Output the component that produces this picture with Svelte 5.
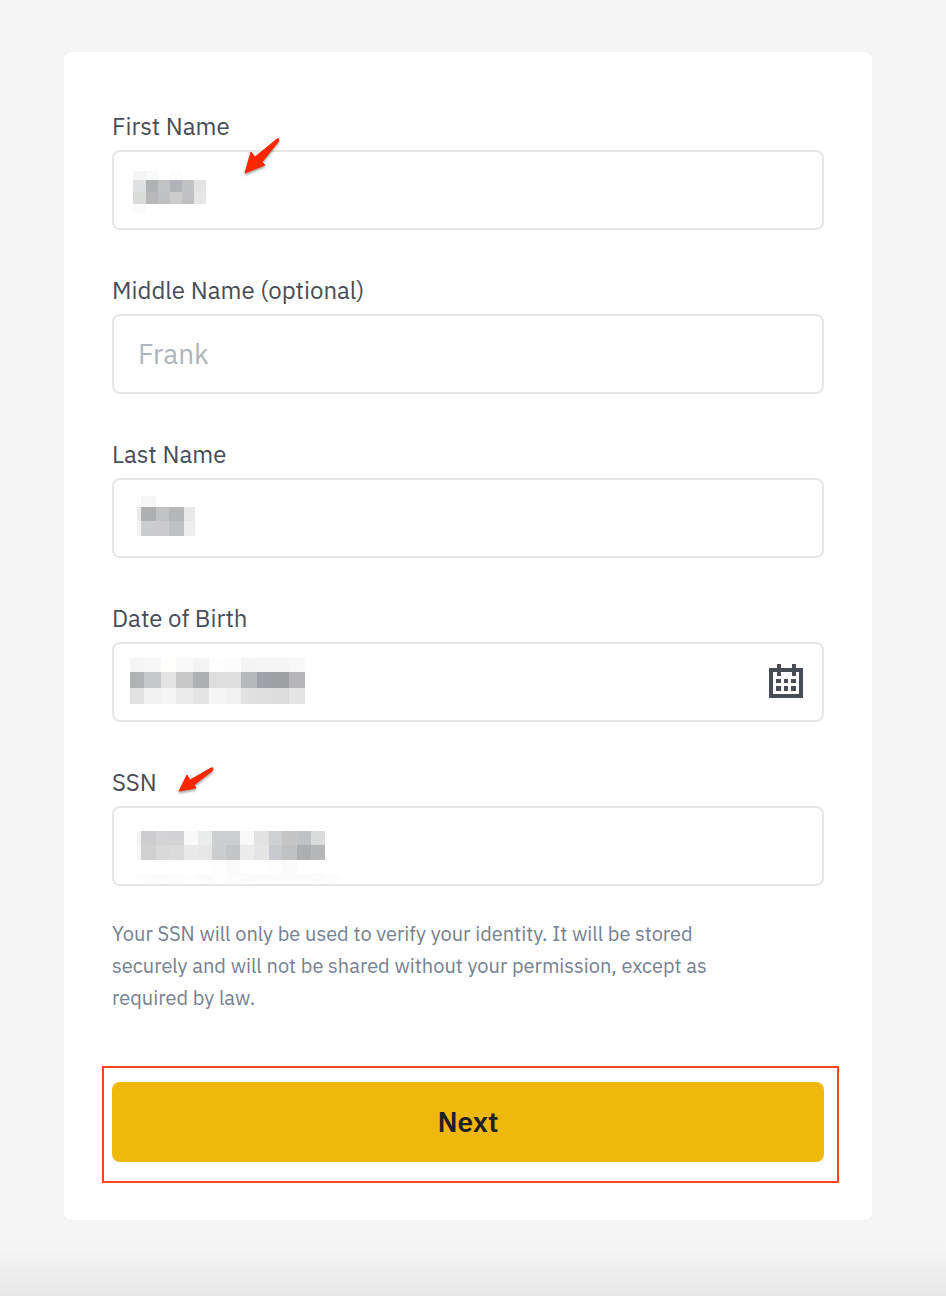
<script lang="ts">
  interface Mosaic {
    left: number;
    top: number;
    cols: number[];
    rows: { height: number; shades: string[] }[];
  }

  interface Cell {
    x: number;
    y: number;
    width: number;
    height: number;
    shade: string;
  }

  interface Field {
    id: string;
    label: string;
    placeholder?: string;
    calendar?: boolean;
    arrow?: 'steep' | 'flat';
    mosaic?: Mosaic;
  }

  const fields: Field[] = [
    {
      id: 'first-name',
      label: 'First Name',
      arrow: 'steep',
      mosaic: {
        left: 21,
        top: 21,
        cols: [13, 12, 12, 12, 12, 12],
        rows: [
          { height: 9, shades: ['f5f5f5', 'f9fbfa', 'ffffff', 'fcfcfc', 'ffffff', 'ffffff'] },
          { height: 12, shades: ['e0e1e3', 'b0b2b4', 'c0c2c4', 'b2b3b6', 'c0c1c3', 'e3e3e4'] },
          { height: 12, shades: ['dadcda', 'b7b7b9', 'bfc0c2', 'cccbcc', 'c0c0c3', 'e6e6e6'] },
          { height: 9, shades: ['fbfbfb', 'ffffff', 'ffffff', 'ffffff', 'ffffff', 'ffffff'] },
        ],
      },
    },
    { id: 'middle-name', label: 'Middle Name (optional)', placeholder: 'Frank' },
    {
      id: 'last-name',
      label: 'Last Name',
      mosaic: {
        left: 25,
        top: 18,
        cols: [4, 15, 13, 15, 11],
        rows: [
          { height: 11, shades: ['fdfdfd', 'f6f6f6', 'ffffff', 'ffffff', 'ffffff'] },
          { height: 14, shades: ['eaeaea', 'aeafb1', 'c1c2c4', 'b6b7b9', 'e8e8e8'] },
          { height: 15, shades: ['f2f2f2', 'cbccce', 'cccbcd', 'bfc0c2', 'eeeeee'] },
        ],
      },
    },
    {
      id: 'birth-date',
      label: 'Date of Birth',
      calendar: true,
      mosaic: {
        left: 18,
        top: 16,
        cols: [14, 17, 15, 17, 16, 16, 16, 16, 15, 17, 16],
        rows: [
          { height: 14, shades: ['f5f5f5', 'f7f7f7', 'fefefc', 'f9f9f9', 'f3f3f4', 'fdfdfd', 'fcfcfc', 'f4f4f4', 'f5f5f5', 'f5f5f5', 'f8f8f8'] },
          { height: 16, shades: ['b0b1b4', 'c5c7c9', 'e4e4e4', 'c7c7c8', 'afb0b2', 'dedede', 'dfdfdf', 'b7b9bb', 'a2a3a8', '9fa0a4', 'b6b6b8'] },
          { height: 16, shades: ['e2e2e2', 'f1f1f1', 'f5f5f5', 'eaeaea', 'e5e5e5', 'f5f5f5', 'f1f1f1', 'e1e1e1', 'dfdfdf', 'dcdcdc', 'e4e4e4'] },
        ],
      },
    },
    {
      id: 'ssn',
      label: 'SSN',
      arrow: 'flat',
      mosaic: {
        left: 25,
        top: 25,
        cols: [4, 15, 14, 14, 14, 14, 14, 14, 14, 15, 13, 15, 14, 14, 16],
        rows: [
          { height: 14, shades: ['f3f3f3', 'cdcdd0', 'd4d4d6', 'd3d3d6', 'f9f9f9', 'e9ecea', 'cdced0', 'cdced0', 'f9f9f9', 'e2e2e2', 'cfd0d2', 'c5c5c5', 'c0c2c4', 'd9dcda', 'ffffff'] },
          { height: 15, shades: ['f7f7f7', 'd0d0d0', 'd9d9d9', 'dbdbdc', 'e9e9e9', 'e7e7e7', 'cccdcf', 'c4c5c7', 'ebebeb', 'e5e5e5', 'c8c9cc', 'c0c1c3', 'aeafb1', 'b6b7b9', 'fefefe'] },
          { height: 14, shades: ['ffffff', 'ffffff', 'ffffff', 'ffffff', 'ffffff', 'ffffff', 'fdfdfd', 'fafafa', 'ffffff', 'ffffff', 'fdfdfd', 'fafafa', 'ffffff', 'ffffff', 'ffffff'] },
          { height: 7, shades: ['fcfcfc', 'fcfcfc', 'fbfbfb', 'fcfcfc', 'fdfdfd', 'fbfbfb', 'fdfdfd', 'fcfcfc', 'fafafa', 'fbfbfb', 'fbfbfb', 'fbfbfb', 'fbfbfb', 'fafafa', 'fcfcfc'] },
        ],
      },
    },
  ];

  function sum(values: number[]) {
    return values.reduce((total, value) => total + value, 0);
  }

  function toCells(mosaic: Mosaic): Cell[] {
    const cells: Cell[] = [];
    let y = 0;
    for (const row of mosaic.rows) {
      let x = 0;
      mosaic.cols.forEach((width, i) => {
        cells.push({ x, y, width, height: row.height, shade: `#${row.shades[i]}` });
        x += width;
      });
      y += row.height;
    }
    return cells;
  }
</script>

<main class="page">
  <form class="card" onsubmit={(e) => e.preventDefault()}>
    <div class="fields">
      {#each fields as field (field.id)}
        <div class="field">
          <label for={field.id}>{field.label}</label>
          <div class="control">
            <input id={field.id} type="text" placeholder={field.placeholder} autocomplete="off" />
            {#if field.mosaic}
              <svg
                class="mosaic"
                style="left: {field.mosaic.left}px; top: {field.mosaic.top}px"
                width={sum(field.mosaic.cols)}
                height={sum(field.mosaic.rows.map((row) => row.height))}
                shape-rendering="crispEdges"
                aria-hidden="true"
              >
                {#each toCells(field.mosaic) as cell}
                  <rect x={cell.x} y={cell.y} width={cell.width} height={cell.height} fill={cell.shade} />
                {/each}
              </svg>
            {/if}
            {#if field.calendar}
              <button class="calendar" type="button" aria-label="Choose date">
                <svg viewBox="0 0 34 34" width="34" height="34" fill="currentColor" shape-rendering="crispEdges">
                  <path fill-rule="evenodd" d="M0 4h34v30H0zM4 8v22h26V8z"/>
                  <path d="M8 0h4v12H8zM23 0h4v12h-4z"/>
                  <path d="M7 15h5v4H7zM15 15h4v4h-4zM22 15h5v4h-5zM7 22h5v5H7zM15 22h4v5h-4zM22 22h5v5h-5z"/>
                </svg>
              </button>
            {/if}
          </div>
          {#if field.arrow === 'steep'}
            <svg class="arrow steep" viewBox="0 0 36 38" width="36" height="38" aria-hidden="true">
              <path d="M1 36 7 15 11 20 33 2Q35 1 35 3L34 5 18 25 21 28z"/>
            </svg>
          {:else if field.arrow === 'flat'}
            <svg class="arrow flat" viewBox="0 0 36 26" width="36" height="26" aria-hidden="true">
              <path d="M1 24 9 8 12 13 33 1Q35 0 35 2L34 4 16 18 18 21z"/>
            </svg>
          {/if}
        </div>
      {/each}
    </div>

    <p class="note">
      Your SSN will only be used to verify your identity. It will be stored securely and will not be
      shared without your permission, except as required by law.
    </p>

    <div class="actions">
      <button class="next" type="submit">Next</button>
    </div>
  </form>
</main>

<style>
  :global(body) {
    background: #f5f5f5;
  }

  .page {
    box-sizing: border-box;
    min-height: 100vh;
    padding: 52px 74px 76px 64px;
    background: linear-gradient(to top, #e7e7e7, #f4f4f4 48px, #f5f5f5 76px);
    font-family: 'IBM Plex Sans', Roboto, sans-serif;
  }

  .card {
    padding: 60px 48px 58px;
    border-radius: 8px;
    background: #fff;
  }

  .fields {
    display: flex;
    flex-direction: column;
    gap: 46px;
  }

  .field {
    position: relative;
    display: flex;
    flex-direction: column;
    gap: 10px;
  }

  label {
    color: #474d57;
    font-size: 24px;
    line-height: 28px;
  }

  .control {
    position: relative;
    display: flex;
  }

  input {
    box-sizing: border-box;
    width: 100%;
    height: 80px;
    padding: 0 24px 2px;
    border: 2px solid #e6e6e6;
    border-radius: 8px;
    outline: none;
    background: #fff;
    color: #1e2026;
    font-family: inherit;
    font-size: 28px;
  }

  input::placeholder {
    color: #aeb4bc;
    opacity: 1;
  }

  input:focus {
    border-color: #f0b90b;
  }

  .mosaic {
    position: absolute;
    pointer-events: none;
  }

  .calendar {
    position: absolute;
    top: 22px;
    right: 21px;
    display: flex;
    padding: 0;
    border: 0;
    background: none;
    color: #474d57;
    cursor: pointer;
  }

  .arrow {
    position: absolute;
    overflow: visible;
    fill: #ff2600;
    stroke: #ff2600;
    stroke-width: 1;
    stroke-linejoin: round;
    filter: drop-shadow(0 2px 1px rgba(0, 0, 0, 0.35));
    pointer-events: none;
  }

  .steep {
    top: 25px;
    left: 132px;
  }

  .flat {
    top: -1px;
    left: 66px;
  }

  .note {
    max-width: 600px;
    margin: 32px 0 68px;
    color: #76808f;
    font-size: 20px;
    line-height: 32px;
  }

  .actions {
    position: relative;
    display: flex;
  }

  .actions::after {
    content: '';
    position: absolute;
    inset: -16px -15px -21px -10px;
    border: 2px solid #ff4422;
    pointer-events: none;
  }

  .next {
    width: 100%;
    height: 80px;
    padding: 0 24px 2px;
    border: 0;
    border-radius: 8px;
    background: #eeb80c;
    color: #1e2026;
    font-family: inherit;
    font-size: 28px;
    font-weight: 600;
    cursor: pointer;
  }

  .next:hover {
    background: #f3c42d;
  }
</style>
